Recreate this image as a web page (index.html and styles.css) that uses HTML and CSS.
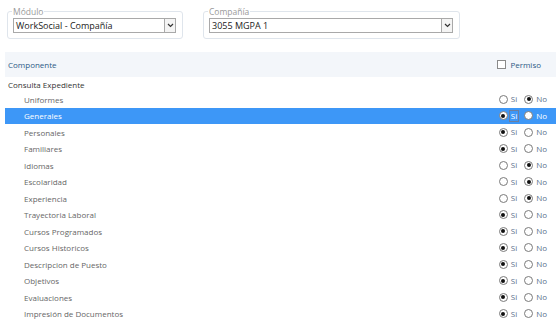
FILE: index.html
```html
<!DOCTYPE html>
<html lang="es">

<head>
    <meta charset="UTF-8" />
    <title>Permisos por Componente</title>
    <link rel="stylesheet" href="styles.css">
</head>

<body>

    <div class="filters">
        <fieldset class="group modulo">
            <legend>Módulo</legend>
            <div class="combo">
                <span class="combo-text">WorkSocial - Compañía</span>
                <span class="combo-btn">
                    <svg width="7" height="5" viewBox="0 0 7 5"><path d="M1 1 L3.5 3.5 L6 1" fill="none" stroke="#333" stroke-width="1.2"/></svg>
                </span>
            </div>
        </fieldset>
        <fieldset class="group compania">
            <legend>Compañía</legend>
            <div class="combo">
                <span class="combo-text">3055 MGPA 1</span>
                <span class="combo-btn">
                    <svg width="7" height="5" viewBox="0 0 7 5"><path d="M1 1 L3.5 3.5 L6 1" fill="none" stroke="#333" stroke-width="1.2"/></svg>
                </span>
            </div>
        </fieldset>
    </div>

    <div class="grid">
        <div class="row head">
            <span class="name">Componente</span>
            <span class="perm"><span class="check"></span>Permiso</span>
        </div>
        <div class="row section">
            <span class="name">Consulta Expediente</span>
        </div>
        <div id="rows"></div>
    </div>

    <script>
        const items = [
            ["Uniformes", false],
            ["Generales", true, true],
            ["Personales", true],
            ["Familiares", true],
            ["Idiomas", false],
            ["Escolaridad", false],
            ["Experiencia", false],
            ["Trayectoria Laboral", true],
            ["Cursos Programados", true],
            ["Cursos Historicos", true],
            ["Descripcion de Puesto", true],
            ["Objetivos", true],
            ["Evaluaciones", true],
            ["Impresión de Documentos", true]
        ];

        const wrapper = document.getElementById("rows");

        items.forEach(([name, si, selected]) => {
            const row = document.createElement("div");
            row.className = "row item" + (selected ? " selected" : "");
            row.innerHTML =
                `<span class="name">${name}</span>` +
                `<span class="opts">` +
                `<span class="radio ${si ? "on" : ""}"></span><span class="lbl si ${selected ? "focus" : ""}">Si</span>` +
                `<span class="radio ${si ? "" : "on"}"></span><span class="lbl">No</span>` +
                `</span>`;
            wrapper.appendChild(row);
        });
    </script>
</body>

</html>
```

FILE: styles.css
```css
* {
    box-sizing: border-box;
}

body {
    margin: 0;
    font-family: 'Open Sans', sans-serif;
    font-size: 8px;
    color: #333;
    background: #fff;
}

.filters {
    display: flex;
    gap: 20px;
    padding: 6px 0 0 7px;
}

.group {
    margin: 0;
    padding: 1px 6px 4px 5px;
    border: 1px solid #dfe5ec;
    border-radius: 3px;
    height: 33px;
}

.group legend {
    padding: 0 1px;
    margin-left: -1px;
    color: #9a9a9a;
    font-size: 8.5px;
    line-height: 11px;
}

.modulo {
    width: 176px;
}

.compania {
    width: 257px;
}

.combo {
    display: flex;
    align-items: center;
    height: 15px;
    border: 1px solid #a9a9a9;
    border-right: none;
    padding-left: 2px;
    background: #fff;
}

.combo-text {
    flex: 1;
    font-size: 9px;
    color: #222;
    white-space: nowrap;
}

.combo-btn {
    display: flex;
    align-items: center;
    justify-content: center;
    width: 12px;
    height: 15px;
    border: 1px solid #a9a9a9;
    background: #f4f4f4;
}

.grid {
    margin: 13px 0 0 5px;
}

.row {
    display: flex;
    align-items: center;
    white-space: nowrap;
}

.head {
    height: 25px;
    background: #f3f6fa;
    padding: 0 15px 0 3px;
    color: #2d5a85;
}

.head .name {
    flex: 1;
}

.perm {
    display: flex;
    align-items: center;
}

.check {
    width: 9px;
    height: 9px;
    border: 1px solid #8a8a8a;
    background: #fff;
    margin-right: 4px;
}

.section {
    height: 14px;
    padding-left: 3px;
    color: #333;
}

.item {
    height: 16.5px;
    padding: 0 7px 0 19px;
    color: #666;
}

.item .name {
    flex: 1;
}

.item.selected {
    background: #3d97f7;
    color: #fff;
}

.opts {
    display: flex;
    align-items: center;
}

.radio {
    width: 9px;
    height: 9px;
    border: 1px solid #7a7a7a;
    border-radius: 50%;
    background: #fff;
    position: relative;
}

.radio.on::after {
    content: "";
    position: absolute;
    left: 1.5px;
    top: 1.5px;
    width: 4px;
    height: 4px;
    border-radius: 50%;
    background: #111;
}

.lbl {
    color: #5a6f8c;
    margin-left: 1px;
    padding: 0 1px;
    border: 1px solid transparent;
    line-height: 10px;
}

.lbl.si {
    margin-right: 5px;
}

.selected .lbl {
    color: #fff;
}

.lbl.focus {
    border-color: #6b7fa0;
}
```
